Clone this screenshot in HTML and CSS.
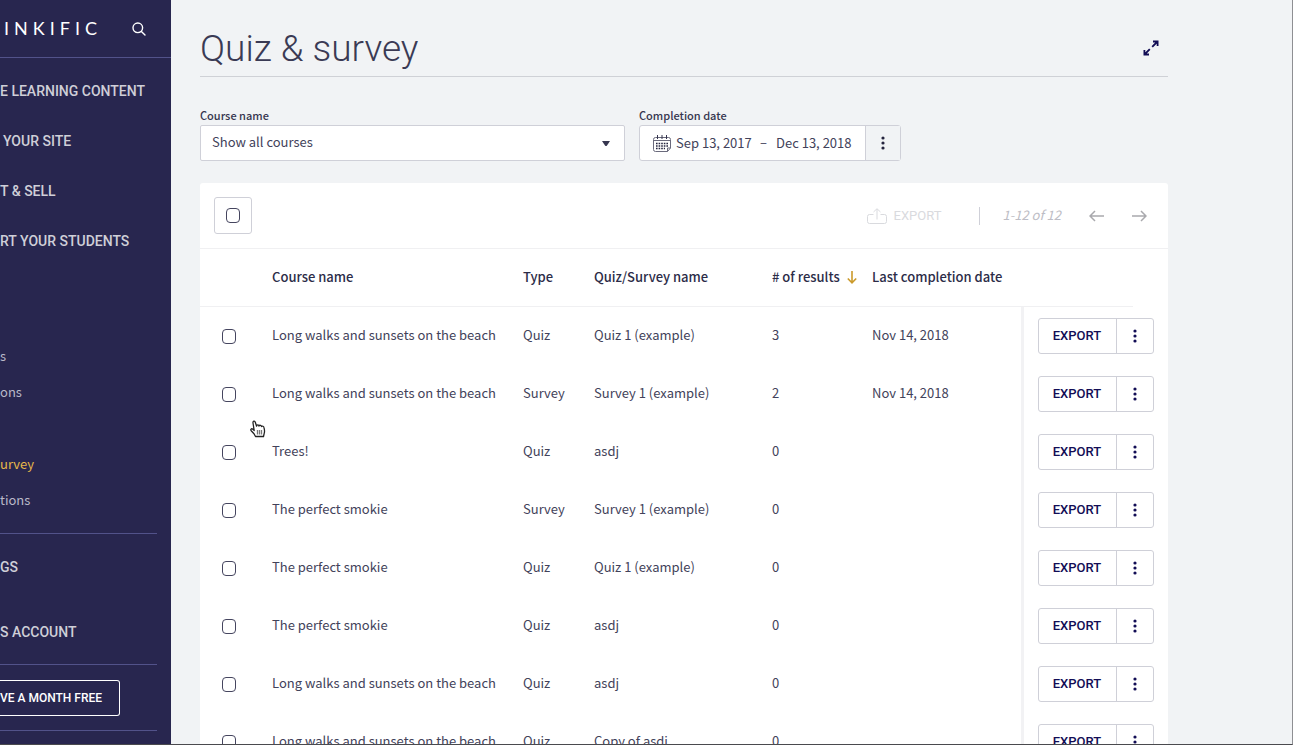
FILE: index.html
```html
<!DOCTYPE html>
<html lang="en">
<head>
    <meta charset="UTF-8">
    <meta name="viewport" content="width=device-width, initial-scale=1.0">
    <title>Quiz &amp; survey</title>
    <link rel="stylesheet" href="styles.css">
</head>
<body>
    <div class="app">
        <aside class="sidebar">
            <div class="brand">
                <a href="#" class="logo">INKIFIC</a>
                <button type="button" class="icon-button search" aria-label="Search">
                    <svg width="14" height="14" viewBox="0 0 14 14" fill="none" stroke="#fff" stroke-width="1.4" stroke-linecap="round">
                        <circle cx="5.8" cy="5.8" r="4.8"/>
                        <path d="M9.4 9.4L13 13"/>
                    </svg>
                </button>
            </div>

            <nav class="nav">
                <a href="#" class="nav-main">E LEARNING CONTENT</a>
                <a href="#" class="nav-main indent">YOUR SITE</a>
                <a href="#" class="nav-main">T &amp; SELL</a>
                <a href="#" class="nav-main">RT YOUR STUDENTS</a>
            </nav>

            <nav class="subnav">
                <a href="#">s</a>
                <a href="#">ons</a>
                <a href="#" class="blank" aria-label="Orders"></a>
                <a href="#" class="active">urvey</a>
                <a href="#">tions</a>
            </nav>

            <nav class="nav account">
                <a href="#" class="nav-main">GS</a>
                <a href="#" class="nav-main">S ACCOUNT</a>
            </nav>

            <div class="promo">
                <button type="button" class="promo-button">VE A MONTH FREE</button>
            </div>
        </aside>

        <main class="main">
            <header class="page-header">
                <h1>Quiz &amp; survey</h1>
                <button type="button" class="icon-button expand" aria-label="Expand">
                    <svg width="16" height="16" viewBox="0 0 16 16" fill="none" stroke="#120d55" stroke-width="1.8">
                        <path d="M9.2 6.8L14 2M10 1.5h4.6v4.6M6.8 9.2L2 14M6 14.5H1.4V9.9"/>
                    </svg>
                </button>
            </header>

            <form class="filters">
                <div class="field course-field">
                    <label for="course">Course name</label>
                    <div class="select">
                        <select id="course">
                            <option>Show all courses</option>
                        </select>
                        <svg class="caret" width="8" height="5" viewBox="0 0 8 5"><path d="M0 0h8L5 4.4a1.3 1.3 0 0 1-2 0z" fill="#36364f"/></svg>
                    </div>
                </div>
                <div class="field">
                    <label for="startDate">Completion date</label>
                    <div class="date-range">
                        <svg class="calendar" width="18" height="17" viewBox="0 0 18 17" fill="none" stroke="#6a6a7c">
                            <path d="M2.5 2.5h13a2 2 0 0 1 2 2V13l-3 3.5h-12a2 2 0 0 1-2-2v-10a2 2 0 0 1 2-2zM.5 5.5h17M17.5 13h-3v3.5"/>
                            <path d="M4.5 0v4M9 0v4M13.5 0v4" stroke="#36364f"/>
                            <path d="M3 8.5h12M3 11h12M3 13.5h9" stroke="#25253f" stroke-width="1.6" stroke-dasharray="1.6 1"/>
                        </svg>
                        <input type="text" id="startDate" value="Sep 13, 2017">
                        <span class="dash">–</span>
                        <input type="text" id="endDate" value="Dec 13, 2018" aria-label="End date">
                        <button type="button" class="date-menu" aria-label="Date options">
                            <svg width="4" height="14" viewBox="0 0 4 14" fill="#25253f"><circle cx="2" cy="2" r="1.6"/><circle cx="2" cy="7" r="1.6"/><circle cx="2" cy="12" r="1.6"/></svg>
                        </button>
                    </div>
                </div>
            </form>

            <section class="panel">
                <div class="toolbar">
                    <label class="select-all"><input type="checkbox" class="check" aria-label="Select all"></label>
                    <button type="button" class="bulk-export" disabled>
                        <svg width="20" height="16" viewBox="0 0 20 16" fill="none" stroke="#d9dade">
                            <path d="M6.5 6.5h-4a2 2 0 0 0-2 2v5a2 2 0 0 0 2 2h15a2 2 0 0 0 2-2v-5a2 2 0 0 0-2-2h-4M10 11.500V1M6.500 4L10 .7 13.500 4"/>
                        </svg>
                        EXPORT
                    </button>
                    <div class="pager">
                        <span class="pager-count">1-12 of 12</span>
                        <button type="button" class="icon-button" aria-label="Previous page">
                            <svg width="15" height="12" viewBox="0 0 15 12" fill="none" stroke="#a9a9ad" stroke-width="1.5"><path d="M15 6H1.200M6 1L1 6l5 5"/></svg>
                        </button>
                        <button type="button" class="icon-button" aria-label="Next page">
                            <svg width="15" height="12" viewBox="0 0 15 12" fill="none" stroke="#a9a9ad" stroke-width="1.5"><path d="M0 6h13.800M9 1l5 5-5 5"/></svg>
                        </button>
                    </div>
                </div>

                <table class="results">
                    <colgroup>
                        <col class="col-check">
                        <col class="col-course">
                        <col class="col-type">
                        <col class="col-name">
                        <col class="col-count">
                        <col class="col-date">
                        <col class="col-actions">
                    </colgroup>
                    <thead>
                        <tr>
                            <th></th>
                            <th>Course name</th>
                            <th>Type</th>
                            <th>Quiz/Survey name</th>
                            <th>
                                <span class="sorted"># of results
                                    <svg width="10" height="13" viewBox="0 0 10 13" fill="none" stroke="#cb9a2b" stroke-width="1.6"><path d="M5 0v11.500M.8 7.500L5 11.800l4.200-4.300"/></svg>
                                </span>
                            </th>
                            <th>Last completion date</th>
                            <th class="actions-head"></th>
                        </tr>
                    </thead>
                    <tbody id="resultRows"></tbody>
                </table>
            </section>
        </main>

        <svg class="pointer" width="16" height="18" viewBox="0 0 16 18" fill="#fff" stroke="#222" stroke-width="1.3" stroke-linejoin="round">
            <path d="M5.500 16.500L4 13.800 1.200 10.700C.2 9.500 1.400 8.200 2.700 9.100l1.500 1.400L3 3C2.700 1 4.700.4 5.300 2.200l1.300 4C6.700 4.700 8.700 4.500 9 6c.6-1.200 2.300-.9 2.500.5.8-.8 2.300-.2 2.500 1.200.4 2 1 3.500.2 5.600l-.7 3.200z"/>
            <path d="M7.500 10v4.500M9.500 10v4.500M11.500 10v4.500" stroke="#777"/>
        </svg>
    </div>

    <script>
        const results = [
            { course: 'Long walks and sunsets on the beach', type: 'Quiz', name: 'Quiz 1 (example)', count: 3, date: 'Nov 14, 2018' },
            { course: 'Long walks and sunsets on the beach', type: 'Survey', name: 'Survey 1 (example)', count: 2, date: 'Nov 14, 2018' },
            { course: 'Trees!', type: 'Quiz', name: 'asdj', count: 0, date: '' },
            { course: 'The perfect smokie', type: 'Survey', name: 'Survey 1 (example)', count: 0, date: '' },
            { course: 'The perfect smokie', type: 'Quiz', name: 'Quiz 1 (example)', count: 0, date: '' },
            { course: 'The perfect smokie', type: 'Quiz', name: 'asdj', count: 0, date: '' },
            { course: 'Long walks and sunsets on the beach', type: 'Quiz', name: 'asdj', count: 0, date: '' },
            { course: 'Long walks and sunsets on the beach', type: 'Quiz', name: 'Copy of asdj', count: 0, date: '' }
        ];

        const resultRows = document.getElementById('resultRows');

        // Build one table row per quiz or survey
        results.forEach(result => {
            const tr = document.createElement('tr');
            tr.innerHTML = `
                <td class="check-cell"><input type="checkbox" class="check" aria-label="Select ${result.name}"></td>
                <td>${result.course}</td>
                <td>${result.type}</td>
                <td>${result.name}</td>
                <td>${result.count}</td>
                <td>${result.date}</td>
                <td class="actions">
                    <div class="button-group">
                        <button type="button" class="export">EXPORT</button>
                        <button type="button" class="more" aria-label="More actions">
                            <svg width="4" height="14" viewBox="0 0 4 14" fill="#120d55"><circle cx="2" cy="2" r="1.6"/><circle cx="2" cy="7" r="1.6"/><circle cx="2" cy="12" r="1.6"/></svg>
                        </button>
                    </div>
                </td>`;
            resultRows.appendChild(tr);
        });
    </script>
</body>
</html>
```

FILE: styles.css
```css
* {
    box-sizing: border-box;
}

body {
    margin: 0;
    background-color: #f1f3f5;
    color: #42425a;
    font-family: "Noto Sans CJK SC", "Noto Sans", sans-serif;
    font-size: 13px;
    line-height: 20px;
}

button,
input,
select {
    margin: 0;
    padding: 0;
    border: 0;
    background: none;
    color: inherit;
    font: inherit;
}

button {
    cursor: pointer;
}

svg {
    display: block;
}

a {
    color: inherit;
    text-decoration: none;
}

.app {
    position: relative;
    display: flex;
    height: 100vh;
    overflow: hidden;
    border-right: 1px solid #8e8f93;
    border-bottom: 1px solid #4a4a4e;
}

.icon-button {
    display: flex;
    align-items: center;
    justify-content: center;
}

/* Sidebar */
.sidebar {
    flex: none;
    width: 171px;
    background-color: #28264f;
    color: #cfcfd8;
    font-family: Roboto, sans-serif;
}

.brand {
    display: flex;
    align-items: center;
    justify-content: space-between;
    height: 58px;
    padding: 0 25px 0 4px;
    border-bottom: 1px solid #52528a;
}

.logo {
    padding-bottom: 2px;
    color: #fff;
    font-family: Lato, sans-serif;
    font-size: 18px;
    letter-spacing: 5px;
}

.nav {
    display: flex;
    flex-direction: column;
    gap: 30px;
    padding-top: 23px;
}

.nav-main {
    font-size: 14px;
    font-weight: 500;
    white-space: nowrap;
}

.indent {
    padding-left: 3px;
}

.subnav {
    display: flex;
    flex-direction: column;
    gap: 16px;
    margin-right: 14px;
    padding: 95px 0 23px;
    border-bottom: 1px solid #52528a;
    color: #b9b9c9;
    font-family: "Noto Sans CJK SC", "Noto Sans", sans-serif;
}

.subnav .blank {
    height: 20px;
}

.subnav .active {
    color: #e6b84a;
}

.account {
    gap: 45px;
    margin-right: 14px;
    padding-bottom: 22px;
    border-bottom: 1px solid #52528a;
}

.promo {
    margin-right: 14px;
    padding: 15px 0 14px;
    border-bottom: 1px solid #52528a;
}

.promo-button {
    height: 36px;
    padding-right: 17px;
    border: 1px solid #fff;
    border-left: 0;
    border-radius: 0 3px 3px 0;
    color: #fff;
    font-size: 12px;
    font-weight: 500;
}

/* Page */
.main {
    flex: 1;
    min-width: 0;
    padding: 20px 124px 0 29px;
}

.page-header {
    display: flex;
    align-items: center;
    justify-content: space-between;
    height: 57px;
    padding-right: 9px;
    border-bottom: 1px solid #cfd1d6;
}

h1 {
    margin: 0;
    padding-top: 2px;
    color: #3a3a54;
    font-family: Roboto, sans-serif;
    font-size: 37px;
    font-weight: 300;
    line-height: 54px;
}

.filters {
    display: flex;
    gap: 14px;
    padding: 29px 0 22px;
}

.field label {
    display: block;
    color: #36364f;
    font-size: 11px;
    font-weight: 500;
    line-height: 19px;
}

.course-field {
    width: 425px;
}

.select {
    display: grid;
    align-items: center;
}

.select select {
    grid-area: 1 / 1;
    width: 100%;
    height: 36px;
    padding: 0 11px 2px;
    border: 1px solid #cfd0d8;
    border-radius: 2px;
    background-color: #fff;
    appearance: none;
}

.caret {
    grid-area: 1 / 1;
    justify-self: end;
    margin-right: 15px;
    pointer-events: none;
}

.date-range {
    display: flex;
    align-items: center;
    height: 36px;
    border: 1px solid #cfd0d8;
    border-radius: 3px;
    background-color: #fff;
}

.calendar {
    margin: 0 5px 0 13px;
}

.date-range input {
    width: 84px;
    height: 34px;
    padding-bottom: 2px;
}

.dash {
    width: 16px;
    padding-bottom: 2px;
}

.date-menu {
    display: flex;
    align-items: center;
    justify-content: center;
    width: 35px;
    height: 34px;
    margin-left: 5px;
    border-left: 1px solid #cfd0d8;
    background-color: #f1f3f5;
}

/* Results */
.panel {
    border-radius: 3px;
    background-color: #fff;
}

.toolbar {
    display: flex;
    align-items: center;
    height: 66px;
    padding: 0 21px 0 14px;
    border-bottom: 1px solid #f0f0f2;
}

.select-all {
    display: flex;
    align-items: center;
    justify-content: center;
    width: 38px;
    height: 37px;
    margin-right: auto;
    border: 1px solid #cfd0d8;
    border-radius: 3px;
}

.check {
    display: block;
    width: 14px;
    height: 15px;
    border: 1px solid #45455f;
    border-radius: 4px;
    background-color: #fff;
    appearance: none;
}

.bulk-export {
    display: flex;
    align-items: center;
    gap: 7px;
    color: #d9dade;
    font-family: Roboto, sans-serif;
}

.pager {
    display: flex;
    align-items: center;
    gap: 28px;
    height: 18px;
    margin-left: 38px;
    padding-left: 22px;
    border-left: 1px solid #cfd0d8;
}

.pager-count {
    padding-bottom: 2px;
    color: #bdbdc5;
    font-style: italic;
}

.results {
    width: 100%;
    border-collapse: collapse;
    table-layout: fixed;
}

.col-check {
    width: 72px;
}

.col-type {
    width: 71px;
}

.col-name {
    width: 178px;
}

.col-count {
    width: 100px;
}

.col-date {
    width: 150px;
}

.col-actions {
    width: 146px;
}

.results th,
.results td {
    height: 58px;
    padding: 0 0 2px;
    text-align: left;
    white-space: nowrap;
}

.results th {
    background: linear-gradient(#f0f0f2, #f0f0f2) left bottom / 100% 1px no-repeat;
    color: #2c2c48;
    font-weight: 500;
}

.results .actions-head {
    background-size: 111px 1px;
}

.sorted {
    display: flex;
    align-items: center;
    gap: 7px;
}

.results .check-cell {
    padding: 0 0 0 22px;
}

.results .actions {
    padding: 0 0 0 14px;
    border-left: 3px solid #f2f2f4;
}

.button-group {
    display: flex;
    width: 116px;
    height: 36px;
    border: 1px solid #cfd0d8;
    border-radius: 3px;
}

.export {
    flex: 1;
    color: #120d55;
    font-family: Roboto, sans-serif;
    font-weight: 500;
}

.more {
    display: flex;
    align-items: center;
    justify-content: center;
    width: 37px;
    border-left: 1px solid #cfd0d8;
}

/* Hand pointer resting over the table */
.pointer {
    position: absolute;
    top: 420px;
    left: 250px;
}
```
